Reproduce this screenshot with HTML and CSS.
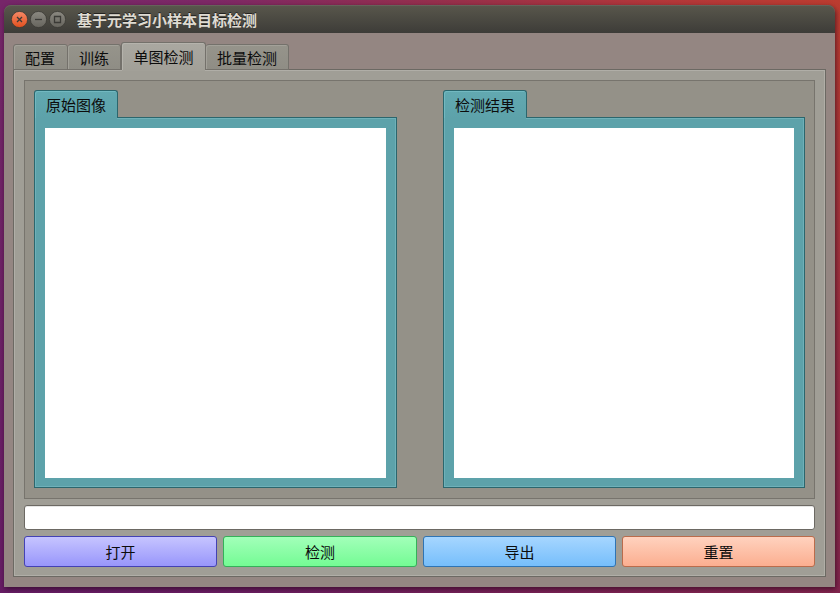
FILE: index.html
```html
<!DOCTYPE html>
<html lang="zh-CN">
<head>
<meta charset="utf-8">
<title>基于元学习小样本目标检测</title>
<link rel="stylesheet" href="styles.css">
</head>
<body>
<div class="window">
  <header class="titlebar">
    <svg class="controls" width="56" height="20" viewBox="0 0 56 20">
      <defs>
        <linearGradient id="close" x1="0" y1="0" x2="0" y2="1"><stop offset="0" stop-color="#f58a68"/><stop offset="1" stop-color="#e24f1d"/></linearGradient>
        <linearGradient id="grey" x1="0" y1="0" x2="0" y2="1"><stop offset="0" stop-color="#8b8981"/><stop offset="1" stop-color="#66645d"/></linearGradient>
      </defs>
      <g stroke="#3a3934" stroke-width="0.8">
        <circle cx="9.5" cy="9.500" r="8.100" fill="url(#close)"/>
        <circle cx="28.500" cy="9.500" r="8.100" fill="url(#grey)"/>
        <circle cx="47.500" cy="9.500" r="8.100" fill="url(#grey)"/>
      </g>
      <g fill="none" stroke="#3b3a36" stroke-width="1.300">
        <path d="M7 7l5 5M12 7l-5 5"/>
        <path d="M25 9.500h7"/>
        <path d="M44.500 6.500h6v6h-6z"/>
      </g>
    </svg>
    <h1 class="title">基于元学习小样本目标检测</h1>
  </header>
  <main class="content">
    <nav class="tabs">
      <span class="tab tab-config">配置</span>
      <span class="tab tab-train">训练</span>
      <span class="tab tab-active">单图检测</span>
      <span class="tab tab-batch">批量检测</span>
    </nav>
    <section class="pane">
      <div class="frame">
        <div class="viewer viewer-source">
          <div class="viewer-tab">原始图像</div>
          <div class="viewer-body"><div class="canvas"></div></div>
        </div>
        <div class="viewer viewer-result">
          <div class="viewer-tab">检测结果</div>
          <div class="viewer-body"><div class="canvas"></div></div>
        </div>
      </div>
      <input class="path" type="text" aria-label="path">
      <div class="actions">
        <button class="btn btn-open">打开</button>
        <button class="btn btn-detect">检测</button>
        <button class="btn btn-export">导出</button>
        <button class="btn btn-reset">重置</button>
      </div>
    </section>
  </main>
</div>
</body>
</html>
```
FILE: styles.css
```css
* {
  box-sizing: border-box;
}

body {
  margin: 0;
  width: 840px;
  height: 593px;
  padding: 5px 5px 6px 4px;
  overflow: hidden;
  background:
    linear-gradient(to bottom, transparent 0%, rgba(92, 22, 98, 0.6) 100%),
    linear-gradient(to right, #762669 0%, #7d2866 25%, #98304a 55%, #b2373a 78%, #bb3c30 100%);
  font: 15px/22px "Noto Sans CJK SC", sans-serif;
  color: #0c0c0c;
}

.window {
  height: 582px;
  display: flex;
  flex-direction: column;
  border-radius: 7px 7px 0 0;
  box-shadow: 1px 2px 5px rgba(30, 0, 20, 0.6);
}

.titlebar {
  height: 28px;
  display: flex;
  align-items: center;
  padding-left: 6px;
  border-radius: 7px 7px 0 0;
  background: linear-gradient(#59574c, #3d3c38);
  box-shadow: inset 0 1px #65635a;
}

.controls {
  margin-top: 1px;
}

.title {
  margin: 2px 0 0 11px;
  font-size: 15px;
  line-height: 22px;
  font-weight: 700;
  color: #dfdbd2;
  text-shadow: 0 -1px #22211e;
}

.content {
  flex: 1;
  padding: 9px 9px 10px;
  background: #948682;
}

.tabs {
  height: 28px;
  display: flex;
  align-items: flex-end;
}

.tab {
  height: 26px;
  padding-top: 2px;
  text-align: center;
  border: 1px solid #74716b;
  border-left-width: 0;
  border-radius: 3px 3px 0 0;
  background: linear-gradient(#96948b, #8f8d85);
  box-shadow: inset 1px 1px #a3a199;
}

.tab-config {
  width: 55px;
  padding-right: 1px;
  border-left-width: 1px;
}

.tab-train {
  width: 53px;
}

.tab-active {
  position: relative;
  z-index: 1;
  width: 85px;
  height: 28px;
  padding-top: 3px;
  border-left-width: 1px;
  border-bottom: 0;
  background: linear-gradient(#aaa8a1, #a2a098);
  box-shadow: inset 1px 1px #b5b3ac;
}

.tab-batch {
  width: 83px;
}

/* Hides the pane highlight so the selected tab joins the pane. */
.tab-active::after,
.viewer-tab::after {
  content: "";
  position: absolute;
  left: 0;
  right: 0;
  bottom: -1px;
  height: 1px;
  background: #a2a098;
}

.pane {
  height: 508px;
  margin-top: -1px;
  padding: 10px;
  border: 1px solid #6c6963;
  background: #a09e96;
  box-shadow: inset 1px 1px #b0aea7, inset -1px -1px #b0aea7;
}

.frame {
  height: 419px;
  display: flex;
  justify-content: space-between;
  padding: 9px;
  border: 1px solid #77746d;
  background: #949188;
}

.viewer-source {
  width: 363px;
}

.viewer-result {
  width: 362px;
}

.viewer-tab {
  position: relative;
  width: 84px;
  height: 28px;
  padding-top: 3px;
  text-align: center;
  border: 1px solid #2b666d;
  border-bottom: 0;
  border-radius: 3px 3px 0 0;
  background: linear-gradient(#62a9b1, #5da2aa);
  box-shadow: inset 1px 1px #72b9c1;
}

.viewer-tab::after {
  left: 1px;
  background: #5da2aa;
}

.viewer-body {
  height: 371px;
  margin-top: -1px;
  padding: 10px;
  border: 1px solid #2b666d;
  background: #5da2aa;
  box-shadow: inset 1px 1px #6fb1b9, inset -1px -1px #6fb1b9;
}

.canvas {
  height: 350px;
  background: #fff;
}

.path {
  display: block;
  width: 100%;
  height: 25px;
  margin: 6px 0;
  padding: 0 6px;
  border: 1px solid #6c6963;
  border-radius: 3px;
  background: #fff;
  box-shadow: inset 0 1px #e6e6e5;
}

.actions {
  display: grid;
  grid-template-columns: 193px 194px 193px 193px;
  gap: 6px;
}

.btn {
  height: 31px;
  padding: 0;
  border: 1px solid;
  border-radius: 3px;
  font: inherit;
  color: #0c0c0c;
}

.btn-open {
  border-color: #4442b4;
  background: linear-gradient(#c6c4ff, #9896fb);
}

.btn-detect {
  border-color: #35b05a;
  background: linear-gradient(#a2ffb9, #74fb94);
}

.btn-export {
  border-color: #2f74b4;
  background: linear-gradient(#a6d6ff, #76befb);
}

.btn-reset {
  border-color: #ba6c4c;
  background: linear-gradient(#ffd2be, #fbae90);
}
```
